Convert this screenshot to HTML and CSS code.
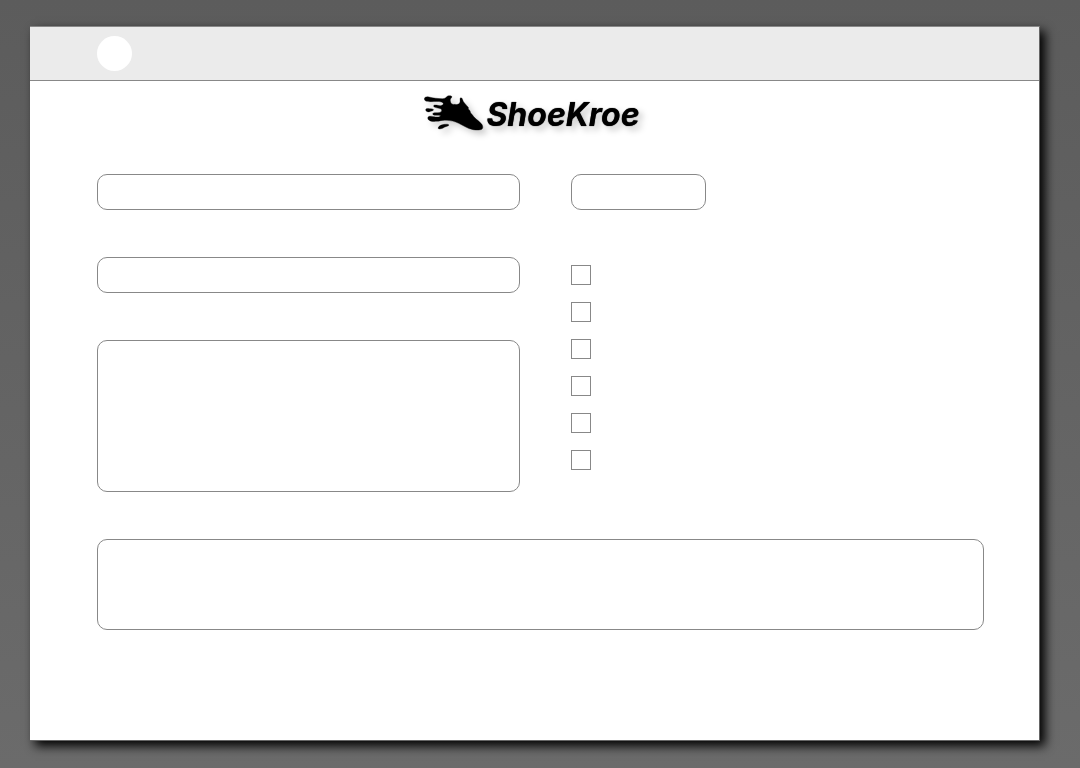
FILE: index.html
```html
<!DOCTYPE html>
<html lang="en">
<head>
<meta charset="utf-8">
<meta name="viewport" content="width=device-width, initial-scale=1">
<title>ShoeKroe</title>
<link rel="stylesheet" href="styles.css">
</head>
<body>
<div class="sheet">
  <header class="topbar"><button class="round-button" type="button" aria-label="Menu"></button></header>
  <main class="content">
    <h1 class="brand">
      <svg class="brand-mark" viewBox="27 33 180 111" aria-hidden="true">
        <path d="M28 42C28 36 35 34 42 36C55 39 69 41 82 41C91 41 94 36 98 33C103 31 111 32 111 36C108 40 105 42 106 48C107 57 113 59 120 58C127 60 134 57 135 51C136 47 134 42 136 39C139 37 142 40 143 44C145 53 153 57 156 63L160 67L160 72L165 77L167 84L171 88C177 99 190 106 198 115C203 120 205 127 202 131C198 136 185 136 174 134C157 131 144 121 131 115C119 109 108 107 96 106C85 104 76 108 65 109C54 110 45 109 40 104C37 100 38 95 43 94C52 92 60 97 70 96C77 95 79 92 72 91C64 91 54 92 53 87C53 82 61 83 69 83C77 83 81 79 80 74C77 70 67 70 60 67C54 65 55 60 60 60C68 60 74 64 81 61C87 58 86 53 79 51C69 48 59 50 49 50C39 50 29 50 28 42Z"/>
        <path d="M32 74C33 69 39 70 44 71C49 71 54 71 56 74C55 78 48 78 44 80C38 82 32 79 32 74Z"/>
        <path d="M69 130C70 123 79 119 88 118C94 117 101 117 102 120C101 124 93 124 88 127C82 131 72 134 69 130Z"/>
      </svg>
      <span class="brand-name">ShoeKroe</span>
    </h1>
    <form class="form">
      <div class="column">
        <input class="field" type="text" aria-label="Name">
        <input class="field" type="text" aria-label="Email">
        <textarea class="field field-tall" aria-label="Address"></textarea>
      </div>
      <div class="column column-options">
        <input class="field field-short" type="text" aria-label="Size">
        <div class="options">
          <input class="check" type="checkbox" aria-label="Option 1">
          <input class="check" type="checkbox" aria-label="Option 2">
          <input class="check" type="checkbox" aria-label="Option 3">
          <input class="check" type="checkbox" aria-label="Option 4">
          <input class="check" type="checkbox" aria-label="Option 5">
          <input class="check" type="checkbox" aria-label="Option 6">
        </div>
      </div>
      <textarea class="field field-wide" aria-label="Comments"></textarea>
    </form>
  </main>
</div>
</body>
</html>
```
FILE: styles.css
```css
* { box-sizing: border-box; }

body {
  display: flex;
  min-height: 100vh;
  margin: 0;
  padding: 26px 40px 27px 30px;
  background: linear-gradient(#5c5c5c, #6b6b6b);
  font-family: Inter, "Liberation Sans", sans-serif;
}

.sheet {
  flex: 1;
  border: 1px solid #888;
  border-left: 0;
  border-right-color: #666;
  border-bottom-color: #666;
  background: #fff;
  box-shadow: 5px 5px 10px 0 #000;
}

.topbar {
  padding: 9px 67px;
  border-bottom: 1px solid #888;
  background: #ebebeb;
}

.round-button {
  display: block;
  width: 35px;
  height: 35px;
  padding: 0;
  border: 0;
  border-radius: 50%;
  background: #fff;
}

.brand {
  display: flex;
  justify-content: center;
  gap: 2px;
  margin: 0;
  padding: 15px 5px 41px 0;
  filter: drop-shadow(4px 4px 3px rgba(0, 0, 0, 0.2));
}

.brand-mark {
  width: 60px;
  height: 37px;
  overflow: visible;
  stroke: #000;
  stroke-width: 1;
  stroke-linejoin: round;
}

.brand-name {
  font-size: 32px;
  font-style: italic;
  font-weight: 700;
  line-height: 37px;
  text-shadow: 0 0 1px #000;
}

.form {
  display: grid;
  grid-template-columns: 423fr 413fr;
  gap: 47px 51px;
  padding: 0 55px 48px 67px;
}

.column {
  display: flex;
  flex-direction: column;
  gap: 47px;
}

.column-options { gap: 55px; }

.options {
  display: flex;
  flex-direction: column;
  gap: 17px;
}

.field {
  display: block;
  width: 100%;
  height: 36px;
  margin: 0;
  padding: 8px 12px;
  border: 1px solid #888;
  border-radius: 10px;
  background: #fff;
  font: 16px/20px Inter, "Liberation Sans", sans-serif;
  resize: none;
}

.field-short { width: 135px; }
.field-tall { height: 152px; }

.field-wide {
  grid-column: 1 / -1;
  height: 91px;
}

.check {
  appearance: none;
  width: 20px;
  height: 20px;
  margin: 0;
  border: 1px solid #888;
  background: #fff;
}

.check:checked { background: #888; }
```
